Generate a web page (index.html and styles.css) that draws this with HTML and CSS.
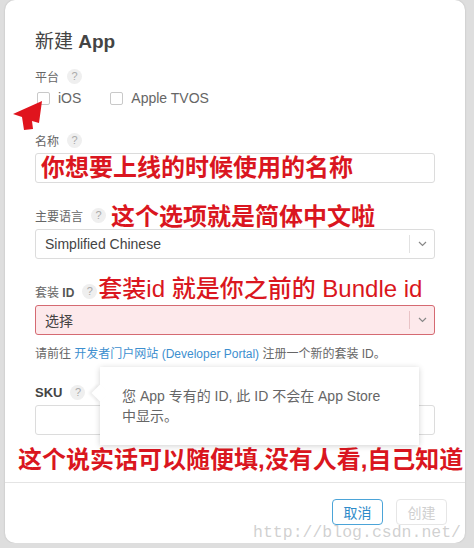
FILE: index.html
```html
<!DOCTYPE html>
<html lang="zh-CN">
    <head>
        <meta charset="UTF-8" />
        <meta name="viewport" content="width=device-width, initial-scale=1.0" />
        <title>新建 App</title>
        <link rel="stylesheet" href="styles.css">
    </head>
    <body>
        <section class="modal">
            <h1 class="modal-title">新建 <b>App</b></h1>

            <div class="field">
                <div class="label-row">
                    <span class="label">平台</span>
                    <span class="help">?</span>
                </div>
                <div class="check-row">
                    <label class="check"><span class="box"></span>iOS</label>
                    <label class="check"><span class="box"></span>Apple TVOS</label>
                </div>
                <svg class="arrow-mark" width="36" height="36" viewBox="0 0 36 36">
                    <polygon points="32,2 3,15 12,18 14,31 23,30 22,22 29,24" fill="#e0141d" />
                </svg>
            </div>

            <div class="field gap">
                <div class="label-row">
                    <span class="label">名称</span>
                    <span class="help">?</span>
                </div>
                <div class="input"><span class="note">你想要上线的时候使用的名称</span></div>
            </div>

            <div class="field gap">
                <div class="label-row">
                    <span class="label">主要语言</span>
                    <span class="help">?</span>
                    <span class="note note-inline">这个选项就是简体中文啦</span>
                </div>
                <div class="select">
                    <span class="select-value">Simplified Chinese</span>
                    <span class="select-caret">
                        <svg width="9" height="6" viewBox="0 0 9 6"><path d="M1 1l3.5 3.5L8 1" fill="none" stroke="#888" stroke-width="1.2" /></svg>
                    </span>
                </div>
            </div>

            <div class="field gap">
                <div class="label-row">
                    <span class="label">套装 <b>ID</b></span>
                    <span class="help">?</span>
                    <span class="note note-tight">套装id 就是你之前的 Bundle id</span>
                </div>
                <div class="select select-error">
                    <span class="select-value">选择</span>
                    <span class="select-caret">
                        <svg width="9" height="6" viewBox="0 0 9 6"><path d="M1 1l3.5 3.5L8 1" fill="none" stroke="#888" stroke-width="1.2" /></svg>
                    </span>
                </div>
                <p class="hint">请前往 <a href="#">开发者门户网站 (Developer Portal)</a> 注册一个新的套装 ID。</p>
            </div>

            <div class="field sku">
                <div class="label-row">
                    <span class="label label-strong">SKU</span>
                    <span class="help">?</span>
                </div>
                <div class="input"></div>
                <div class="popover">
                    <span class="popover-tip"></span>
                    您 App 专有的 ID, 此 ID 不会在 App Store<br>中显示。
                </div>
            </div>

            <p class="note note-wide">这个说实话可以随便填,没有人看,自己知道</p>

            <footer class="modal-footer">
                <button class="btn btn-primary">取消</button>
                <button class="btn btn-disabled">创建</button>
            </footer>
            <span class="watermark">http://blog.csdn.net/</span>
        </section>
    </body>
</html>
```

FILE: styles.css
```css
* {
    box-sizing: border-box;
    margin: 0;
    padding: 0;
}
body {
    background-color: #dedede;
    padding: 0 9px 0 5px;
    font-family: "Liberation Sans", "Noto Sans CJK SC", sans-serif;
    color: #444;
}
.modal {
    position: relative;
    width: 460px;
    height: 543px;
    background-color: #fff;
    border-radius: 10px;
    box-shadow: 0 0 2px rgba(0, 0, 0, 0.18);
    padding: 30px 30px 0 30px;
    display: flex;
    flex-direction: column;
}
.modal-title {
    font-size: 19px;
    line-height: 24px;
    font-weight: normal;
    color: #444;
    margin-bottom: 10px;
}
.modal-title b {
    font-weight: bold;
}
.field {
    position: relative;
    display: flex;
    flex-direction: column;
}
.field.gap {
    margin-top: 20px;
}
.label-row {
    display: flex;
    align-items: center;
    height: 24px;
    white-space: nowrap;
}
.label {
    flex-shrink: 0;
    font-size: 12px;
    color: #666;
}
.label b {
    font-weight: bold;
    color: #555;
}
.label-strong {
    font-size: 13px;
    font-weight: bold;
    color: #444;
}
.help {
    flex-shrink: 0;
    display: inline-flex;
    align-items: center;
    justify-content: center;
    width: 15px;
    height: 15px;
    margin-left: 8px;
    border-radius: 50%;
    background-color: #efefef;
    color: #aaa;
    font-size: 11px;
}
.check-row {
    display: flex;
    align-items: center;
    height: 20px;
    gap: 27px;
}
.check {
    display: flex;
    align-items: center;
    font-size: 14px;
    color: #666;
}
.box {
    width: 13px;
    height: 13px;
    border: 1px solid #c9c9c9;
    border-radius: 2px;
    margin: 0 8px 0 2px;
}
.arrow-mark {
    position: absolute;
    left: -25px;
    top: 35px;
}
.input {
    height: 30px;
    border: 1px solid #dcdcdc;
    border-radius: 3px;
    padding-left: 5px;
    display: flex;
    align-items: center;
    margin-top: 1px;
}
.note {
    color: #da1620;
    font-size: 24px;
    font-weight: 700;
    line-height: 28px;
    white-space: nowrap;
}
.note-inline {
    margin-left: 5px;
    margin-top: 4px;
}
.note-tight {
    margin-left: 1px;
    margin-top: -4px;
    font-weight: 500;
}
.select {
    height: 30px;
    border: 1px solid #dcdcdc;
    border-radius: 3px;
    display: flex;
    align-items: center;
    margin-top: 2px;
}
.select-value {
    flex: 1;
    padding-left: 9px;
    font-size: 14px;
    color: #444;
}
.select-caret {
    width: 25px;
    height: 18px;
    border-left: 1px solid #e2e2e2;
    display: flex;
    align-items: center;
    justify-content: center;
}
.select-error {
    border-color: #d56a72;
    background-color: #fde9eb;
}
.select-error .select-caret {
    border-left-color: #e9c3c6;
}
.hint {
    margin-top: 10px;
    font-size: 12px;
    line-height: 18px;
    color: #666;
}
.hint a {
    color: #3d8fcf;
    text-decoration: none;
}
.sku {
    margin-top: 17px;
}
.popover {
    position: absolute;
    left: 65px;
    top: -13px;
    width: 319px;
    height: 78px;
    background-color: #fff;
    box-shadow: 0 1px 6px rgba(0, 0, 0, 0.18);
    padding: 19px 10px 0 22px;
    font-size: 14px;
    line-height: 20px;
    color: #666;
}
.popover-tip {
    position: absolute;
    left: -6px;
    top: 20px;
    width: 12px;
    height: 12px;
    background-color: #fff;
    transform: rotate(45deg);
    box-shadow: -2px 2px 3px rgba(0, 0, 0, 0.08);
}
.note-wide {
    margin: 10px -17px 0 -17px;
    line-height: 30px;
}
.modal-footer {
    margin: 7px -30px 0 -30px;
    border-top: 1px solid #e4e4e4;
    padding: 16px 18px 0 0;
    display: flex;
    justify-content: flex-end;
    gap: 13px;
}
.btn {
    width: 51px;
    height: 26px;
    border-radius: 4px;
    background-color: #fff;
    font-family: "Liberation Sans", "Noto Sans CJK SC", sans-serif;
    font-size: 14px;
}
.btn-primary {
    border: 1px solid #4ba4d8;
    color: #2f8bc9;
}
.btn-disabled {
    border: 1px solid #e6e6e6;
    color: #cfcfcf;
}
.watermark {
    position: absolute;
    right: 4px;
    bottom: 1px;
    font-family: "Liberation Mono", monospace;
    font-size: 16.5px;
    color: rgba(170, 170, 170, 0.55);
}
```
